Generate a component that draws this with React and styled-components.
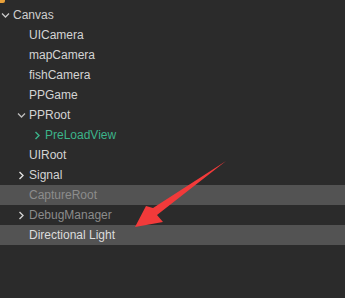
import React from "react";
import styled, { createGlobalStyle } from "styled-components";

const Global = createGlobalStyle`
  html, body { margin: 0; padding: 0; background: #2b2b2b; }
  body { width: 345px; height: 298px; overflow: hidden; }
`;

const Panel = styled.div`
  position: relative;
  width: 345px;
  height: 298px;
  background: #2b2b2b;
  font-family: Arial, "Liberation Sans", sans-serif;
  font-size: 12px;
`;

const TopStrip = styled.div`
  height: 5px;
  display: flex;
  align-items: flex-start;
`;

const OrangeMark = styled.div`
  width: 5px;
  height: 3px;
  background: #e9a13a;
  border-bottom-right-radius: 2px;
`;

const Row = styled.div`
  height: 20px;
  display: flex;
  align-items: center;
  padding-left: ${(p) => p.$level * 16}px;
  background: ${(p) => (p.$selected ? "#535353" : "transparent")};
  color: ${(p) => p.$color};
`;

const Toggle = styled.span`
  width: 13px;
  height: 20px;
  display: flex;
  align-items: center;
  justify-content: flex-start;
  flex-shrink: 0;
`;

const Label = styled.span`
  white-space: nowrap;
  line-height: 20px;
`;

const Arrow = styled.svg`
  position: absolute;
  left: 0;
  top: 0;
  pointer-events: none;
`;

const Chevron = ({ open, color }) =>
  open ? (
    <svg width="9" height="8" viewBox="0 0 9 8" style={{ marginLeft: 1 }}>
      <path d="M1 2.5 L4.5 6 L8 2.5" fill="none" stroke={color} strokeWidth="1.3" />
    </svg>
  ) : (
    <svg width="8" height="9" viewBox="0 0 8 9" style={{ marginLeft: 1 }}>
      <path d="M2.5 1 L6 4.5 L2.5 8" fill="none" stroke={color} strokeWidth="1.4" />
    </svg>
  );

const NORMAL = "#d4d4d4";
const DIM = "#8c8c8c";
const GREEN = "#3cb48a";

const items = [
  { label: "Canvas", level: 0, toggle: "open", color: "#cfcfcf" },
  { label: "UICamera", level: 1, color: NORMAL },
  { label: "mapCamera", level: 1, color: NORMAL },
  { label: "fishCamera", level: 1, color: NORMAL },
  { label: "PPGame", level: 1, color: NORMAL },
  { label: "PPRoot", level: 1, toggle: "open", color: NORMAL, chev: "#bdbdbd" },
  { label: "PreLoadView", level: 2, toggle: "closed", color: GREEN, chev: GREEN },
  { label: "UIRoot", level: 1, color: NORMAL },
  { label: "Signal", level: 1, toggle: "closed", color: NORMAL, chev: "#e0e0e0" },
  { label: "CaptureRoot", level: 1, color: DIM, selected: true },
  { label: "DebugManager", level: 1, toggle: "closed", color: DIM, chev: "#d0d0d0" },
  { label: "Directional Light", level: 1, color: "#dcdcdc", selected: true },
];

export default function App() {
  return (
    <>
      <Global />
      <Panel>
        <TopStrip>
          <OrangeMark />
        </TopStrip>
        {items.map((it) => (
          <Row key={it.label} $level={it.level} $color={it.color} $selected={it.selected}>
            <Toggle>
              {it.toggle && <Chevron open={it.toggle === "open"} color={it.chev || "#c8c8c8"} />}
            </Toggle>
            <Label>{it.label}</Label>
          </Row>
        ))}
        <Arrow width="345" height="298" viewBox="0 0 345 298">
          <polygon
            points="226,161 153,208 146,206 135,227 163,222 157,215"
            fill="#f23a3a"
          />
        </Arrow>
      </Panel>
    </>
  );
}
